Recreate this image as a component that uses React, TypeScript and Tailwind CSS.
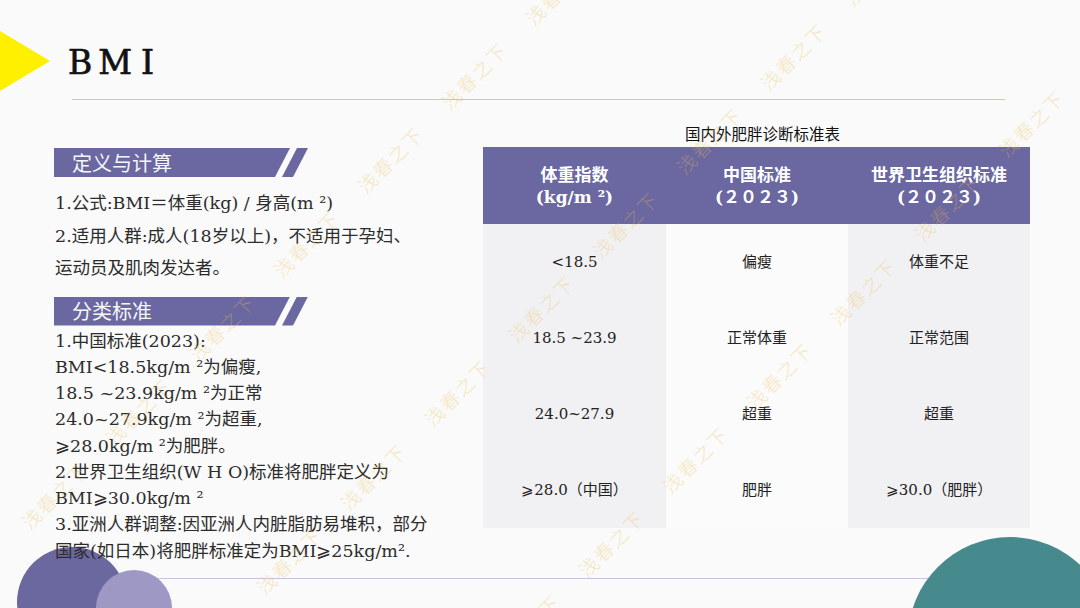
import React from "react";

const SERIF = "font-['DejaVu_Serif','Noto_Sans_CJK_SC',serif]";

function SectionHeader({ title }: { title: string }) {
  return (
    <div className="flex h-[29px] items-stretch">
      <div className="flex w-[236px] items-center bg-[#6a67a1] pl-[18px] [clip-path:polygon(0_0,236px_0,221px_100%,0_100%)]">
        <span className="font-['Noto_Sans_CJK_SC',sans-serif] text-[20px] leading-none text-[#f6f6fa]">
          {title}
        </span>
      </div>
      <div className="-ml-[8px] w-[26px] bg-[#6a67a1] [clip-path:polygon(15px_0,26px_0,11px_100%,0_100%)]" />
    </div>
  );
}

function Watermarks() {
  const bases: [number, number][] = [
    [390, 159],
    [709, 140],
    [1031, 123],
  ];
  const pts: [number, number][] = [];
  for (const [bx, by] of bases) {
    for (let j = -7; j <= 3; j++) {
      const x = bx + 84 * j;
      const y = by - 84 * j;
      if (x > -40 && x < 1120 && y > -40 && y < 650) pts.push([x, y]);
    }
  }
  return (
    <div className="pointer-events-none absolute inset-0 z-20">
      {pts.map(([x, y], i) => (
        <span
          key={i}
          className="absolute whitespace-nowrap font-['Noto_Sans_CJK_SC',sans-serif] text-[19px] font-light leading-none tracking-[2px] text-[#f0c050] opacity-35"
          style={{ left: x, top: y, transform: "translate(-50%,-50%) rotate(-45deg)" }}
        >
          浅春之下
        </span>
      ))}
    </div>
  );
}

const rows: [string, string, string][] = [
  ["<18.5", "偏瘦", "体重不足"],
  ["18.5 ~23.9", "正常体重", "正常范围"],
  ["24.0~27.9", "超重", "超重"],
  ["⩾28.0（中国）", "肥胖", "⩾30.0（肥胖）"],
];

export default function App() {
  return (
    <div className="relative h-[608px] w-[1080px] overflow-hidden bg-[#fafafa] text-[#2c2c2c]">
      {/* yellow triangle */}
      <svg className="absolute left-0 top-0" width="60" height="100" viewBox="0 0 60 100">
        <polygon points="0,31 50,61 0,91" fill="#fff000" />
      </svg>

      {/* bottom circles (over the bottom rule, under the text) */}
      <div className="absolute left-[17px] top-[547px] z-[5] h-[110px] w-[110px] rounded-full bg-[#6b679f]" />
      <div className="absolute left-[96px] top-[570px] z-[5] h-[76px] w-[76px] rounded-full bg-[#9d98c4]" />
      <div className="absolute left-[908px] top-[537px] z-[5] h-[204px] w-[204px] rounded-full bg-[#468a8e]" />

      <div className="flex h-full flex-col">
        {/* title */}
        <div className="relative z-10 h-[99px] pl-[68px] pt-[46px]">
          <h1
            className={`${SERIF} flex text-[33px] leading-none text-[#111] [-webkit-text-stroke:0.7px_#111]`}
          >
            <span className="mr-[6px]">B</span>
            <span className="mr-[9px]">M</span>
            <span>I</span>
          </h1>
        </div>
        <div className="ml-[72px] h-px w-[933px] bg-[#c6c4dc]" />

        {/* main */}
        <div className="flex h-[478px] pl-[54px]">
          {/* left column */}
          <div className={`relative z-10 w-[429px] pt-[48px] ${SERIF} text-[17.5px]`}>
            <SectionHeader title="定义与计算" />
            <div className="mt-[10px] pl-[1px] leading-[32.5px]">
              <div>1.公式:BMI＝体重(kg) / 身高(m ²)</div>
              <div>
                2.适用人群:成人(18岁以上)，不适用于孕妇、
                <br />
                运动员及肌肉发达者。
              </div>
            </div>
            <div className="mt-[12px]">
              <SectionHeader title="分类标准" />
            </div>
            <div className="mt-[2px] pl-[1px] leading-[26.25px]">
              <div>1.中国标准(2023):</div>
              <div>BMI&lt;18.5kg/m ²为偏瘦,</div>
              <div>18.5 ~23.9kg/m ²为正常</div>
              <div>24.0~27.9kg/m ²为超重,</div>
              <div>⩾28.0kg/m ²为肥胖。</div>
              <div>2.世界卫生组织(W H O)标准将肥胖定义为</div>
              <div>BMI⩾30.0kg/m ²</div>
              <div>3.亚洲人群调整:因亚洲人内脏脂肪易堆积，部分</div>
              <div>国家(如日本)将肥胖标准定为BMI⩾25kg/m².</div>
            </div>
          </div>

          {/* right column: table */}
          <div className="relative z-10 w-[547px] pt-[22px]">
            <div className="mb-[3px] pl-[12px] text-center font-['Noto_Sans_CJK_SC',sans-serif] text-[15.5px] leading-[22px] text-[#111]">
              国内外肥胖诊断标准表
            </div>
            <div className="grid h-[77px] grid-cols-[183px_182px_182px] bg-[#6a67a1] text-white">
              {[
                ["体重指数", "(kg/m ²)"],
                ["中国标准", "(２０２３)"],
                ["世界卫生组织标准", "(２０２３)"],
              ].map(([a, b], i) => (
                <div
                  key={i}
                  className={`flex flex-col items-center justify-center ${SERIF} text-[17px] font-bold leading-[22px]`}
                >
                  <span>{a}</span>
                  <span>{b}</span>
                </div>
              ))}
            </div>
            <div className="grid grid-cols-[183px_182px_182px]">
              {rows.map((r, ri) =>
                r.map((c, ci) => (
                  <div
                    key={`${ri}-${ci}`}
                    className={`flex h-[76px] items-center justify-center ${SERIF} text-[15px] text-[#222] ${
                      ci === 1 ? "bg-[#fbfbfb]" : "bg-[#f1f1f4]"
                    }`}
                  >
                    {c}
                  </div>
                ))
              )}
            </div>
          </div>
        </div>
        <div className="ml-[72px] h-px w-[933px] bg-[#c6c4dc]" />
      </div>

      <Watermarks />
    </div>
  );
}
